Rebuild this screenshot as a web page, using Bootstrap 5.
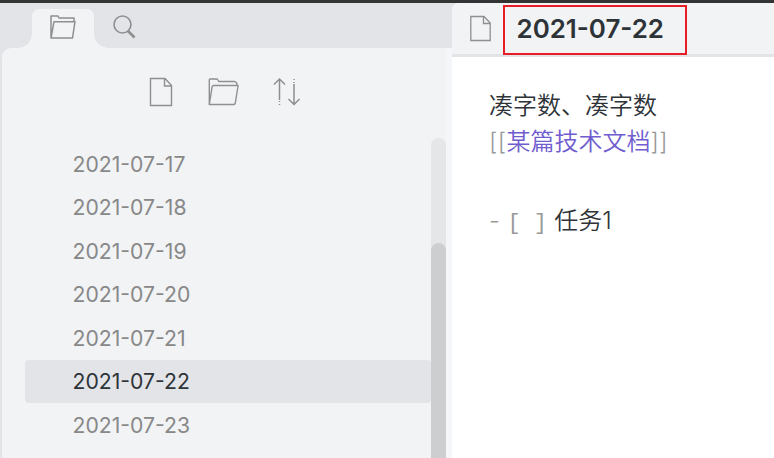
<!DOCTYPE html>
<html lang="zh-CN">
<head>
<meta charset="utf-8">
<meta name="viewport" content="width=device-width, initial-scale=1">
<title>2021-07-22</title>
<link href="https://cdn.jsdelivr.net/npm/bootstrap@5.3.0/dist/css/bootstrap.min.css" rel="stylesheet">
<style>
body{font-family:Inter,"Noto Sans CJK SC",sans-serif;background:#e3e4e8;color:#2e3338}
svg{display:block;fill:none;stroke:#8f8f8f;flex:none}
.titlebar{height:3px;background:#343434;flex:none}
.sidebar{width:452px;background:#e3e4e8;padding-left:2px}
.tabs{height:45px;padding-left:30px}
.tab{width:62px;height:39px;position:relative;padding:6px 0 0 18px}
.tab-on{background:#f1f3f5;border-radius:7px 7px 0 0}
.tab-on::before,.tab-on::after{content:"";position:absolute;bottom:0;width:14px;height:14px}
.tab-on::before{right:100%;background:radial-gradient(circle at 0 0,transparent 13.5px,#f1f3f5 14px)}
.tab-on::after{left:100%;background:radial-gradient(circle at 100% 0,transparent 13.5px,#f1f3f5 14px)}
.panel{background:#f1f3f5;border-radius:9px 0 0 0;border-right:6px solid #f5f6f9}
.tools{height:90px;padding:29px 0 0 147px;gap:34px}
.files{padding:4.5px 0 0 23px;font-size:21.2px}
.file{height:43.5px;line-height:43.5px;padding-left:47.5px;color:#888;border-radius:4px}
.file-on{height:43px;margin-bottom:.5px;background:#e3e4e8;color:#2e3338}
.track{width:15px;background:#e5e6e8;border-radius:8px 8px 0 0;padding-top:105px}
.thumb{background:#cdced0;border-radius:8px 8px 0 0}
.note{background:#fff;border-radius:7px 0 0 0}
.note-head{height:54px;background:#f1f3f5;border-bottom:3px solid #e3e4e8;border-radius:7px 0 0 0;padding:2px 0 0 18px;gap:12px}
.note-title{width:184px;height:50px;border:2px solid #e91d25;padding-left:11.5px;line-height:44px;font-size:25.9px;font-weight:600}
.editor{padding:30px 0 0 37px;font-size:24px;font-weight:350}
.editor>div{height:36px;line-height:37px;white-space:nowrap}
.mk{color:#999;letter-spacing:.4px}
.lnk{color:#705dcf}
.mono{font-family:"Liberation Mono",monospace;white-space:pre;font-size:22px;letter-spacing:0}
.editor .task{margin-top:43px}
</style>
</head>
<body class="vh-100 overflow-hidden">
<div class="d-flex flex-column h-100">
<div class="titlebar"></div>
<div class="d-flex flex-grow-1 overflow-hidden">
<aside class="sidebar d-flex flex-column flex-shrink-0">
<div class="tabs d-flex align-items-end">
<div class="tab tab-on"><svg width="26" height="24" viewBox="0 0 26 24" stroke-width="1.5"><path d="M1 23V1h7l1 2h15v3M1 23 4 6.700h21L22.500 23Z" stroke-linejoin="round"/></svg></div>
<div class="tab"><svg width="24" height="24" viewBox="0 0 24 24"><circle cx="10.500" cy="9.500" r="8.500" stroke-width="1.600"/><path d="m16 16 6.500 6.500" stroke-width="2.600"/></svg></div>
</div>
<div class="panel d-flex flex-column flex-grow-1">
<div class="tools d-flex">
<svg width="24" height="30" viewBox="0 0 24 30" stroke-width="1.400"><path d="M1.500 1.500H16L22.500 8.500V28.500H1.500ZM15.500 1.500V9H22.500"/></svg>
<svg width="32" height="30" viewBox="-1.500 0 32 30" stroke-width="1.400"><path d="M.8 27.500V3q0-1 1-1h7l1.500 2.500h16l2 1.500v2.500M.8 27.500 3.600 9.800q.2-1.300 1.500-1.300h24.500L26.800 26q-.3 1.500-1.500 1.500Z" stroke-linejoin="round"/></svg>
<svg width="28" height="30" viewBox="0 0 28 30" stroke-width="1.500"><path d="M6.500 2v21m0 1v1m0 2v1M1 7.500 6.500 2 12 7.500M21 7v20.500M15.500 22l5.500 5.500 5.500-5.500M21 2v1m0 2v1"/></svg>
</div>
<div class="d-flex flex-grow-1">
<div class="files flex-grow-1">
<div class="file">2021-07-17</div>
<div class="file">2021-07-18</div>
<div class="file">2021-07-19</div>
<div class="file">2021-07-20</div>
<div class="file">2021-07-21</div>
<div class="file file-on">2021-07-22</div>
<div class="file">2021-07-23</div>
</div>
<div class="track d-flex flex-column"><div class="thumb flex-grow-1"></div></div>
</div>
</div>
</aside>
<main class="note flex-grow-1">
<div class="note-head d-flex">
<svg class="mt-2" width="21" height="30" viewBox="0 0 21 30" stroke-width="1.300"><path d="M.8 3.500H14L20.200 10V27.500H.8ZM13.500 3.500V10.500H20"/></svg>
<div class="note-title">2021-07-22</div>
</div>
<div class="editor">
<div>凑字数、凑字数</div>
<div><span class="mk">[[</span><span class="lnk">某篇技术文档</span><span class="mk">]]</span></div>
<div class="task"><span class="mk">- <span class="mono">[ ]</span> </span>任务1</div>
</div>
</main>
</div>
</div>
<script src="https://cdn.jsdelivr.net/npm/bootstrap@5.3.0/dist/js/bootstrap.bundle.min.js"></script>
</body>
</html>
